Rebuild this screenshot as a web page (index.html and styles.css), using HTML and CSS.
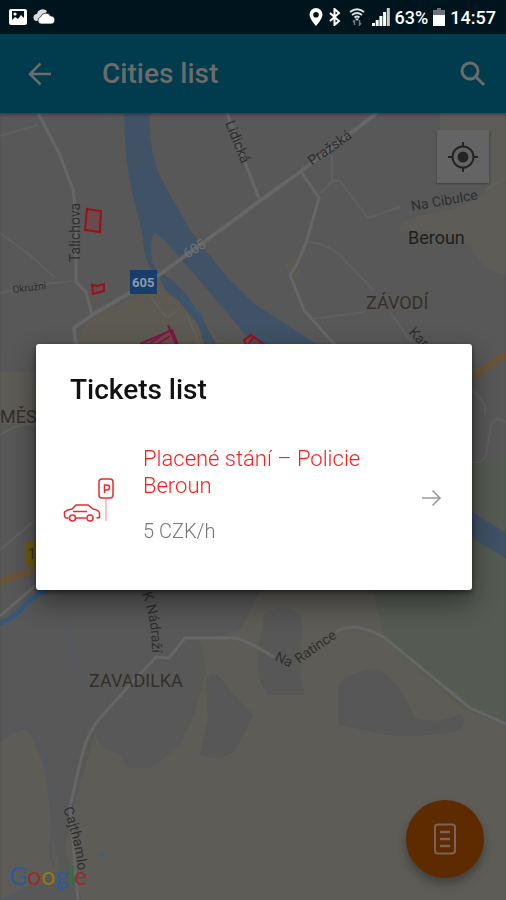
FILE: index.html
```html
<!DOCTYPE html>
<html lang="en">
<head>
  <meta charset="UTF-8">
  <title>Cities list</title>
  <meta name="viewport" content="width=device-width, initial-scale=1.0">
  <link rel="stylesheet" href="styles.css">
</head>
<body>

  <div class="status-bar">
    <div class="status-group">
      <svg width="20" height="18" viewBox="0 0 20 18">
        <path fill="#fff" fill-rule="evenodd" d="M3 1h14a2 2 0 0 1 2 2v12a2 2 0 0 1-2 2H3a2 2 0 0 1-2-2V3a2 2 0 0 1 2-2zM4 3v9l3-3 3 2 3-4 3 3V3z"/>
        <circle cx="7" cy="6" r="1.6" fill="#fff"/>
      </svg>
      <svg width="22" height="16" viewBox="0 0 22 16">
        <path fill="#ddd" d="M4 12a3.5 3.5 0 0 1 0-7 6 6 0 0 1 10-3L8 12z"/>
        <path fill="#fff" stroke="#00141d" stroke-width=".7" d="M8 15a3.6 3.6 0 0 1-.5-7 5.4 5.4 0 0 1 10-1 4 4 0 0 1 .5 8z"/>
      </svg>
    </div>
    <div class="status-group">
      <svg width="14" height="18" viewBox="0 0 14 18"><path fill="#fff" fill-rule="evenodd" d="M7 0a6.5 6.5 0 0 1 6.500 6.500C13.500 11 7 18 7 18S.5 11 .5 6.500A6.500 6.500 0 0 1 7 0zm0 4a2.800 2.800 0 1 0 0 5.600A2.800 2.800 0 0 0 7 4z"/></svg>
      <svg width="14" height="18" viewBox="0 0 14 18"><path fill="none" stroke="#fff" stroke-width="2" d="M2 5l9 8-4.500 4V1L11 5l-9 8"/></svg>
      <svg class="wifi" width="16" height="18" viewBox="0 0 16 18">
        <path fill="none" stroke="#ddd" stroke-width="1.800" d="M1 4q7-5.500 14 0M3 7q5-4 10 0M5.500 9.500q2.500-2 5 0"/>
        <path fill="#ddd" d="M8 13L6 10.500h4z"/>
        <path fill="none" stroke="#6d7b82" stroke-width="1.500" d="M5.500 12v5M4 14l1.500-2M10.500 12v5l1.500-2"/>
      </svg>
      <svg width="18" height="18" viewBox="0 0 18 18">
        <path fill="#fff" d="M0 15h3v3H0zM3.700 12h3v6h-3zM7.400 8h3v10h-3zM11.100 4h3v14h-3z"/>
        <path fill="#ccc" d="M14.800 0h3v18h-3z"/>
      </svg>
      <span>63%</span>
      <svg width="12" height="18" viewBox="0 0 12 18"><path fill="#69747a" d="M4 0h4v2h4v6H0V2h4z"/><path fill="#fff" d="M0 7h12v11H0z"/></svg>
      <span>14:57</span>
    </div>
  </div>

  <header class="toolbar">
    <button class="icon-btn" aria-label="Back">
      <svg width="24" height="24" viewBox="0 0 24 24"><path fill="none" stroke="#6b6b6b" stroke-width="2.500" d="M23 12H2.500M12.500 1.500L2 12l10.500 10.500"/></svg>
    </button>
    <h1>Cities list</h1>
    <button class="icon-btn" aria-label="Search">
      <svg width="26" height="26" viewBox="0 0 26 26"><g fill="none" stroke="#6b6b6b" stroke-width="3"><circle cx="10" cy="10" r="8"/><path d="M15.500 15.500l8.500 8.500"/></g></svg>
    </button>
  </header>

  <main class="map">
    <svg class="map-canvas" viewBox="0 113 506 787" preserveAspectRatio="xMidYMid slice">
      <defs>
        <path id="nadrazi" d="M142 594Q152 618 152 656"/>
        <path id="cajtham" d="M63 809Q75 838 79 880"/>
      </defs>

      <!-- land -->
      <g class="fields">
        <path d="M440 113H506V275Q485 272 470 247Q440 226 400 232Q395 218 440 212Q478 206 492 180V130H440z"/>
        <path d="M84 325L92 316 150 290 160 275 220 340 255 345H75z" class="warm"/>
        <path d="M0 372H40V424H0z"/>
        <path d="M284 264l12-5 5 12-8 10z" class="warm"/>
        <path d="M0 742L25 728Q50 760 52 830L60 870 0 900z"/>
        <path d="M200 640Q206 660 205 675L194 715 180 745 150 768 128 768 120 755 103 747 95 735 75 800 65 850 82 900H506V590H260L240 630z"/>
      </g>
      <path class="wood" d="M373 590L506 590V725L465 710 430 680 385 640z"/>
      <path class="wood" d="M472 460H506V600H472z"/>
      <g class="built">
        <path d="M206 680Q214 664 228 688L253 715Q242 738 234 752Q215 762 200 755Q204 735 208 720z"/>
        <path d="M264 615Q280 602 300 614Q306 630 299 655L304 695H268Q256 680 258 655z"/>
        <path d="M338 685Q355 668 380 670Q404 688 415 718Q440 725 460 714Q468 722 460 730Q400 742 365 730L338 725z"/>
      </g>

      <!-- water -->
      <g class="water">
        <path d="M124 113H150Q148 150 160 177L190 230 225 275 253 303 318 345 254 345Q215 298 168 244L155 232Q149 240 152 262L160 276 152 272Q147 262 144 250Q143 230 135 205Q124 160 124 113z"/>
        <path d="M155 270Q176 280 188 297L200 315 217 345H205L198 325 180 302 165 290z"/>
        <path d="M472 512L506 533V558L472 538z"/>
      </g>
      <g class="stream">
        <path d="M0 624Q14 618 25 605T48 592" stroke-width="5"/>
        <path d="M180 295L203 318"/>
      </g>
      <g class="brook">
        <path d="M60 610Q72 640 75 660L98 697M3 727Q27 720 45 748Q50 800 52 830Q48 850 54 868M0 900L47 886"/>
      </g>

      <!-- roads -->
      <g class="road">
        <path class="main" d="M76 345L74 328 92 315 155 278 253 206 300 172 377 113"/>
        <path d="M38 113L60 155 73 190 76 215V282L86 292 92 315"/>
        <path d="M227 113L240 150 259 198M300 170L319 198 307 240 297 264 290 275 304 310 335 345"/>
        <path d="M78 900L70 806 82 755Q88 732 100 718L128 687 156 657 169 658 185 638H236Q250 642 274 657"/>
        <path d="M336 632Q355 620 385 638L430 675 470 708 506 724"/>
        <path d="M0 616L35 586"/>
      </g>
      <g class="lane">
        <path d="M0 136L38 125M0 233L30 255 55 278M0 293L25 288M45 284L72 281"/>
        <path d="M321 193L332 181H340L368 218 400 207M485 190L506 178M332 181V155"/>
        <path d="M308 242Q325 243 340 255L372 289M312 319L365 312M390 312L410 340"/>
        <path d="M150 296L167 318 180 308M187 315L200 345"/>
        <path d="M0 435Q20 422 36 424M0 550L35 520M472 388L485 405V415M472 462Q485 465 487 450L491 425Q495 415 506 422"/>
      </g>
      <path class="highway" d="M0 582L36 569M472 377L506 354"/>

      <!-- paid zones -->
      <g class="zone">
        <path d="M87 209L101 211 100 232 85 230z"/>
        <path d="M92 285L97 286 104 284V291L93 294z"/>
        <path d="M140 344L172 330 178 345z" class="pink"/>
        <path d="M168 325L176 344M148 345L165 333M156 345L170 336" class="pink"/>
        <path d="M244 340L251 335 265 345H246zM248 345L253 338"/>
      </g>

      <path class="badge" d="M130 270H157V294H130z"/>
      <text class="badge-text" x="132" y="287">605</text>
      <path class="badge-e" d="M26 542H36V566H26z"/>
      <text class="street" x="28" y="559">1</text>

      <text class="street" transform="translate(80 262) rotate(-90)">Talichova</text>
      <text class="street" transform="translate(225 123) rotate(68)">Lidická</text>
      <text class="street" transform="translate(312 166) rotate(-35)">Pražská</text>
      <text class="street" transform="translate(412 211) rotate(-10)">Na Cibulce</text>
      <text class="street small" transform="translate(13 293) rotate(-7)">Okružní</text>
      <text class="street" transform="translate(408 333) rotate(46)">Kar</text>
      <text class="street ghost" transform="translate(187 259) rotate(-32)">605</text>
      <text class="street"><textPath href="#nadrazi">K Nádraží</textPath></text>
      <text class="street" transform="translate(274 660) rotate(25)">Na</text>
      <text class="street" transform="translate(299 664) rotate(-35)">Ratince</text>
      <text class="street"><textPath href="#cajtham">Cajthamlo</textPath></text>
      <text class="town" x="408" y="244">Beroun</text>
      <text class="district" x="366" y="309">ZÁVODÍ</text>
      <text class="district" x="0" y="423">MĚS</text>
      <text class="district" x="89" y="687">ZAVADILKA</text>
      <circle cx="102" cy="854" r="1.500" fill="#33618c"/>
    </svg>

    <button class="locate" aria-label="My location">
      <svg width="30" height="30" viewBox="0 0 30 30">
        <circle cx="15" cy="15" r="5.500" fill="#242424"/>
        <g fill="none" stroke="#242424" stroke-width="2"><circle cx="15" cy="15" r="10.500"/><path d="M15 0v5M15 25v5M0 15h5M25 15h5"/></g>
      </svg>
    </button>

    <a class="google" href="#"><span class="b">G</span><span class="r">o</span><span class="y">o</span><span class="b">g</span><span class="g">l</span><span class="r">e</span></a>

    <button class="fab" aria-label="Tickets">
      <svg width="24" height="32" viewBox="0 0 24 32"><g fill="none" stroke="#7c6259" stroke-width="2"><rect x="2" y="1.500" width="20" height="29" rx="3"/><path d="M7 9h10M7 16h10M7 23h10" stroke-width="2.500"/></g></svg>
    </button>
  </main>

  <div class="overlay">
    <section class="dialog" role="dialog" aria-labelledby="dialogTitle">
      <h2 id="dialogTitle">Tickets list</h2>
      <button class="ticket">
        <svg width="52" height="48" viewBox="0 0 52 48">
          <g fill="none" stroke="#ee2a2a" stroke-width="1.500">
            <rect x="36" y="5" width="14" height="19" rx="3"/>
            <path d="M41.500 19v-8h2.500a2.500 2.500 0 0 1 0 5h-2.500"/>
            <path d="M43 25v22" stroke="#fbc5c8" stroke-width="2"/>
            <path d="M5.500 44H3q-2-1-1.500-6Q4 35.500 9 35l4-4h12l5 4q6 1 6.500 4v4.500l-3 .5M13 44h10M10 37.500h14"/>
            <circle cx="9.500" cy="44" r="3"/>
            <circle cx="27" cy="44" r="3"/>
          </g>
        </svg>
        <span class="ticket-text">
          <span class="ticket-name">Placené stání – Policie Beroun</span>
          <span class="ticket-price">5 CZK/h</span>
        </span>
        <svg width="20" height="18" viewBox="0 0 20 18"><path fill="none" stroke="#999" stroke-width="1.500" d="M0 9h18M10.500 1.500L18 9l-7.500 7.500"/></svg>
      </button>
    </section>
  </div>

</body>
</html>
```

FILE: styles.css
```css
:root {
  --status: #00141d;
  --toolbar: #003c4e;
  --land: #585858;
  --muted: #6b6b6b;
  --red: #ff1c1c;
}

* {
  box-sizing: border-box;
}

body {
  margin: 0;
  min-height: 100vh;
  display: flex;
  flex-direction: column;
  font-family: Roboto, sans-serif;
  background: var(--land);
}

button {
  border: none;
  padding: 0;
  background: none;
  font-family: inherit;
  cursor: pointer;
}

svg {
  display: block;
  flex: none;
}

.status-bar {
  height: 34px;
  padding: 0 10px 0 8px;
  display: flex;
  justify-content: space-between;
  align-items: center;
  background: var(--status);
  color: #fff;
  font-size: 18px;
  font-weight: 500;
}

.status-group {
  display: flex;
  align-items: center;
  gap: 5px;
}

.wifi {
  margin: 0 2px;
}

.toolbar {
  height: 79px;
  padding: 0 20px 0 28px;
  display: flex;
  align-items: center;
  background: var(--toolbar);
}

.toolbar h1 {
  flex: 1;
  margin: 0 0 0 50px;
  color: var(--muted);
  font-size: 28px;
  font-weight: 500;
}

.map {
  position: relative;
  flex: 1;
  overflow: hidden;
  box-shadow: inset 0 3px 3px -1px rgba(0,0,0,0.3);
}

.map-canvas {
  position: absolute;
  z-index: -1;
  width: 100%;
  height: 100%;
}

.fields { fill: #5d5c57; }
.fields .warm { fill: #5d5a51; }
.wood { fill: #555a53; }
.built { fill: #575757; }
.water { fill: #3f5266; }

.stream,
.brook,
.road,
.lane,
.highway {
  fill: none;
  stroke-linejoin: round;
}

.stream {
  stroke: #38587a;
  stroke-width: 3;
}

.brook {
  stroke: #535960;
  stroke-width: 2;
}

.road {
  stroke: #666;
  stroke-width: 3;
}

.road .main {
  stroke-width: 4;
}

.lane {
  stroke: #606060;
  stroke-width: 2;
}

.highway {
  stroke: #6a5539;
  stroke-width: 7;
}

.zone {
  fill: rgba(160,40,50,0.3);
  stroke: #95131d;
  stroke-width: 2;
}

.zone .pink {
  stroke: #7c1748;
}

.badge { fill: #173d6b; }
.badge-e { fill: #6d5a10; }

.badge-text {
  fill: #8d9aab;
  font-size: 13px;
  font-weight: 700;
}

.street {
  fill: #2f2f2f;
  font-size: 14px;
}

.street.small {
  font-size: 10px;
}

.street.ghost {
  fill: #6c7175;
}

.town {
  fill: #211f1c;
  font-size: 18px;
}

.district {
  fill: #352f29;
  font-size: 18px;
}

.locate {
  position: absolute;
  top: 17px;
  right: 17px;
  width: 52px;
  height: 53px;
  display: grid;
  place-items: center;
  background: #646464;
  box-shadow: 0 1px 2px rgba(0,0,0,0.3);
}

.google {
  position: absolute;
  left: 9px;
  bottom: 10px;
  font-family: Lato, sans-serif;
  font-size: 25px;
  line-height: 30px;
  text-decoration: none;
}

.google .b { color: #2d5a9c; }
.google .r { color: #9c2b27; }
.google .y { color: #8f7a16; }
.google .g { color: #24783a; }

.fab {
  position: absolute;
  right: 22px;
  bottom: 22px;
  width: 78px;
  height: 78px;
  display: grid;
  place-items: center;
  border-radius: 50%;
  background: #5e2a00;
  box-shadow: 0 6px 10px rgba(0,0,0,0.3);
}

/* dialog sits in the area below the status bar */
.overlay {
  position: fixed;
  inset: 34px 0 0;
  padding: 0 34px 0 36px;
  display: flex;
  align-items: center;
  justify-content: center;
}

.dialog {
  flex: 1;
  max-width: 560px;
  padding: 28px 0 39px;
  background: #fff;
  border-radius: 3px;
  box-shadow: 0 12px 28px rgba(0,0,0,0.45), 0 2px 5px rgba(0,0,0,0.5);
}

.dialog h2 {
  margin: 0 34px;
  color: #111;
  font-size: 28px;
  font-weight: 500;
  line-height: 36px;
}

.ticket {
  width: 100%;
  padding: 37px 30px 0 27px;
  display: flex;
  align-items: center;
  gap: 28px;
  text-align: left;
}

.ticket-text {
  flex: 1;
  display: flex;
  flex-direction: column;
  gap: 20px;
  padding-bottom: 8px;
  font-weight: 300;
}

.ticket-name {
  color: var(--red);
  font-size: 22px;
  line-height: 27px;
}

.ticket-price {
  color: #777;
  font-size: 20px;
  line-height: 24px;
}
```
